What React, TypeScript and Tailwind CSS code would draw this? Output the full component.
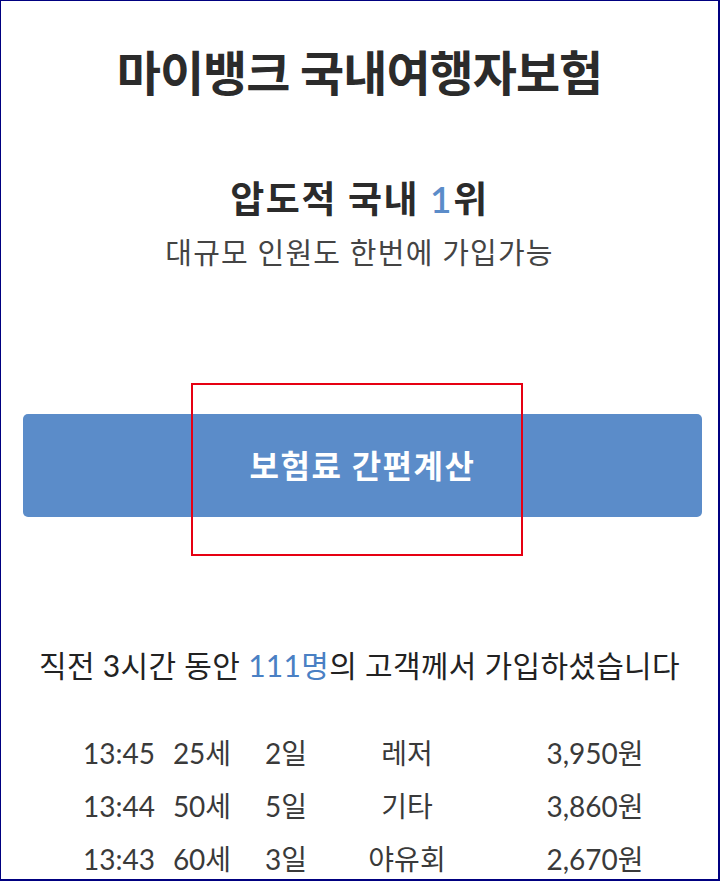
import React from "react";

const rows = [
  { time: "13:45", age: "25세", days: "2일", kind: "레저", price: "3,950원" },
  { time: "13:44", age: "50세", days: "5일", kind: "기타", price: "3,860원" },
  { time: "13:43", age: "60세", days: "3일", kind: "야유회", price: "2,670원" },
];

export default function App() {
  return (
    <div className="relative w-[720px] h-[881px] overflow-hidden bg-white border border-r-2 border-b-2 border-[#000080] font-['Lato','Noto_Sans_CJK_KR',sans-serif] text-[#333]">
      <h1 className="mt-[46px] h-[52px] flex items-center justify-center text-[48px] font-bold tracking-[-1px] text-[#2b2b2b]">
        마이뱅크 국내여행자보험
      </h1>

      <p className="mt-[80px] h-[40px] flex items-center justify-center text-[37px] font-semibold tracking-[1.6px] text-[#2b2b2b]">
        압도적 국내&nbsp;<span className="text-[#5b8cc9]">1</span>위
      </p>

      <p className="mt-[19px] h-[30px] flex items-center justify-center text-[29px] tracking-[1.2px] text-[#444]">
        대규모 인원도 한번에 가입가능
      </p>

      <button className="mt-[146px] ml-[22px] w-[679px] h-[103px] rounded-[5px] bg-[#5b8cc9] flex items-center justify-center text-white text-[32px] font-bold tracking-[1.5px]">
        보험료 간편계산
      </button>

      <p className="mt-[130px] h-[36px] flex items-center justify-center text-[30px] tracking-[0.3px] text-[#222]">
        직전 3시간 동안&nbsp;<span className="text-[#4a80c4]">111명</span>의 고객께서 가입하셨습니다
      </p>

      <div className="mt-[43px] ml-[73px] text-[28px] text-[#3a3a3a]">
        {rows.map((r) => (
          <div key={r.time} className="grid grid-cols-[90px_76px_92px_150px_226px] h-[53px] items-center text-center">
            <span>{r.time}</span>
            <span>{r.age}</span>
            <span>{r.days}</span>
            <span>{r.kind}</span>
            <span>{r.price}</span>
          </div>
        ))}
      </div>

      {/* annotation box over the button */}
      <div className="absolute left-[190px] top-[382px] w-[332px] h-[173px] border-2 border-[#e60012]" />
    </div>
  );
}
